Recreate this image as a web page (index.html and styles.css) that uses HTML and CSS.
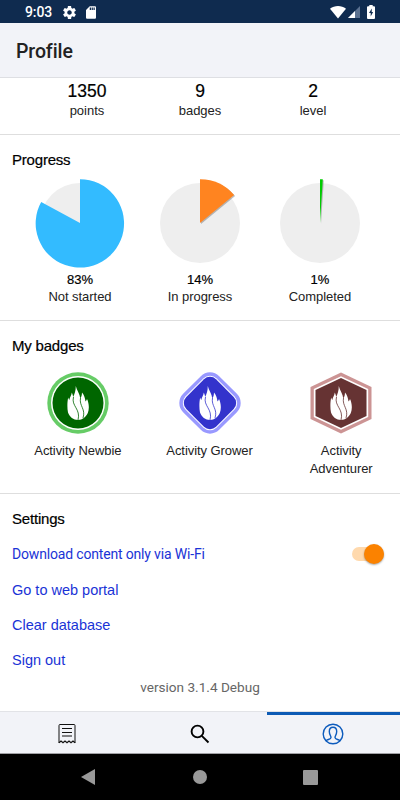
FILE: index.html
```html
<!DOCTYPE html>
<html lang="en">
<head>
    <meta charset="UTF-8">
    <title>Profile</title>
    <link rel="stylesheet" href="styles.css">
</head>
<body>
    <!-- Shared flame shape used by the badges -->
    <svg class="defs" width="0" height="0">
        <symbol id="flame" viewBox="0 0 22 34">
            <path fill="#fff" d="M8.800 0C9.500 4 13 8 13.300 12.500C14.300 11 15 9 15 6.500C17.300 9 18 12 18.500 15.500C19.300 14.800 19.800 14 20 13C22 17 22.500 23 20.800 27C18.800 31 15.500 34 11 34C6.500 34 2.500 31 1 26.500C0 22 .3 15 1.200 11.500C1.500 12.500 1.800 13.500 2.300 14C2.800 11 4.500 9.500 4.800 6.500C5.500 8 6 9.500 6.200 11C7.500 8 8.800 5 8.800 0Z"/>
        </symbol>
    </svg>

    <div class="status-bar">
        <span class="time">9:03</span>
        <svg class="gear" width="13" height="13" viewBox="2 2 20 20"><path fill="#fff" d="M19.430 12.980c.04-.32.07-.64.07-.98s-.03-.66-.07-.98l2.110-1.650c.19-.15.24-.42.12-.64l-2-3.460c-.12-.22-.39-.3-.61-.22l-2.490 1c-.52-.4-1.080-.73-1.690-.98l-.38-2.650C14.460 2.180 14.250 2 14 2h-4c-.25 0-.46.18-.49.42l-.38 2.650c-.61.25-1.170.59-1.690.98l-2.490-1c-.23-.09-.49 0-.61.22l-2 3.460c-.13.22-.07.49.12.64l2.110 1.650c-.04.32-.07.65-.07.98s.03.66.07.98l-2.110 1.650c-.19.15-.24.42-.12.64l2 3.460c.12.22.39.3.61.22l2.490-1c.52.4 1.080.73 1.690.98l.38 2.650c.03.24.24.42.49.42h4c.25 0 .46-.18.49-.42l.38-2.650c.61-.25 1.170-.59 1.690-.98l2.490 1c.23.09.49 0 .61-.22l2-3.460c.12-.22.07-.49-.12-.64l-2.110-1.650zM12 15.500c-1.930 0-3.500-1.570-3.500-3.500s1.570-3.500 3.500-3.500 3.500 1.570 3.500 3.500-1.570 3.500-3.500 3.500z"/></svg>
        <svg class="sd-card" width="10" height="13" viewBox="4 2 16 20"><path fill="#fff" d="M18 2h-8L4 8v12c0 1.100.9 2 2 2h12c1.100 0 2-.9 2-2V4c0-1.100-.9-2-2-2zm-6 6h-2V4h2v4zm3 0h-2V4h2v4zm3 0h-2V4h2v4z"/></svg>
        <svg class="wifi" width="16" height="13" viewBox="0 0 16 13"><path fill="#fff" d="M0 2.800C4.500-.9 11.500-.9 16 2.800L8 12.500Z"/></svg>
        <svg class="signal" width="12" height="12" viewBox="0 0 12 12"><path fill="#5b7190" d="M12 0V12H0Z"/><path fill="#fff" d="M7 5V12H0Z"/></svg>
        <svg class="battery" width="8" height="14" viewBox="0 0 8 14"><path fill="#fff" d="M2.300 0H5.700V1.300H7Q8 1.300 8 2.300V13Q8 14 7 14H1Q0 14 0 13V2.300Q0 1.300 1 1.300H2.300Z"/><path fill="#0f2b4f" d="M4.800 3.500L2 8.100H3.700V11.500L6.100 7H4.700Z"/></svg>
    </div>

    <header class="header">
        <h1>Profile</h1>
    </header>

    <main>
        <section class="stats">
            <div class="stat"><b>1350</b><span>points</span></div>
            <div class="stat"><b>9</b><span>badges</span></div>
            <div class="stat"><b>2</b><span>level</span></div>
        </section>

        <section class="progress">
            <h2>Progress</h2>
            <div class="charts">
                <div class="chart">
                    <svg width="92" height="92" viewBox="-46 -46 92 92">
                        <circle r="40" fill="#eee"/>
                        <path fill="#33bbff" d="M0 0V-43.800A44.200 44.200 0 1 1 -38.820 -21Z"/>
                    </svg>
                    <b>83%</b>
                    <span>Not started</span>
                </div>
                <div class="chart">
                    <svg width="92" height="92" viewBox="-46 -46 92 92">
                        <circle r="40" fill="#eee"/>
                        <path class="slice" fill="#ff8420" d="M0 0V-43.800A44.300 44.300 0 0 1 34.130 -28Z"/>
                    </svg>
                    <b>14%</b>
                    <span>In progress</span>
                </div>
                <div class="chart">
                    <svg width="92" height="92" viewBox="-46 -46 92 92">
                        <circle r="40" fill="#eee"/>
                        <path class="slice" fill="#0c0" d="M0 0V-43.800L2.780 -43.700Z"/>
                    </svg>
                    <b>1%</b>
                    <span>Completed</span>
                </div>
            </div>
        </section>

        <section class="my-badges">
            <h2>My badges</h2>
            <div class="badges">
                <div class="badge">
                    <svg width="62" height="62" viewBox="-31 -31 62 62">
                        <circle r="30.700" fill="#66cc66"/>
                        <circle r="27" fill="#fff"/>
                        <circle r="25.500" fill="#060"/>
                        <use href="#flame" x="-11" y="-17" width="22" height="34"/>
                        <path class="flame-gap" stroke="#060" d="M-4.500-6C-7 3 3 6 0 17M2.500-5C1 3 8 6 5 15"/>
                    </svg>
                    <span>Activity Newbie</span>
                </div>
                <div class="badge">
                    <svg width="62" height="62" viewBox="-31 -31 62 62">
                        <g transform="rotate(45)">
                            <rect x="-25.500" y="-25.500" width="51" height="51" rx="13" fill="#99f"/>
                            <rect x="-22" y="-22" width="44" height="44" rx="9.500" fill="#fff"/>
                            <rect x="-21" y="-21" width="42" height="42" rx="8.500" fill="#33c"/>
                        </g>
                        <use href="#flame" x="-11" y="-17" width="22" height="34"/>
                        <path class="flame-gap" stroke="#33c" d="M-4.500-6C-7 3 3 6 0 17M2.500-5C1 3 8 6 5 15"/>
                    </svg>
                    <span>Activity Grower</span>
                </div>
                <div class="badge">
                    <svg width="62" height="62" viewBox="-31 -31 62 62">
                        <path fill="#cc9494" d="M0-30.500L30.500-16V16L0 30.500L-30.500 16V-16Z"/>
                        <path fill="#fff" d="M0-26.800L27.200-14V14L0 26.800L-27.200 14V-14Z"/>
                        <path fill="#633" d="M0-25L25.500-13V13L0 25L-25.500 13V-13Z"/>
                        <use href="#flame" x="-11" y="-17" width="22" height="34"/>
                        <path class="flame-gap" stroke="#633" d="M-4.500-6C-7 3 3 6 0 17M2.500-5C1 3 8 6 5 15"/>
                    </svg>
                    <span>Activity<br>Adventurer</span>
                </div>
            </div>
        </section>

        <section class="settings">
            <h2>Settings</h2>
            <div class="setting wifi-only">
                <span>Download content only via Wi-Fi</span>
                <div class="toggle"><div class="knob"></div></div>
            </div>
            <a class="setting">Go to web portal</a>
            <a class="setting">Clear database</a>
            <a class="setting">Sign out</a>
            <p class="version">version 3.1.4 Debug</p>
        </section>
    </main>

    <nav class="tabs">
        <div class="tab">
            <svg width="18" height="20" viewBox="0 0 18 20" fill="none" stroke="#111">
                <path d="M1 19V1.500Q1 .5 2 .5H16Q17 .5 17 1.500V19" stroke-width="1"/>
                <path d="M1 18.700L3 17L5 18.700L7 17L9 18.700L11 17L13 18.700L15 17L17 18.700" stroke-width="1.300"/>
                <path d="M4 4.500H14M4 8.500H14M4 12H14" stroke-width="1.200"/>
            </svg>
        </div>
        <div class="tab">
            <svg width="20" height="20" viewBox="0 0 20 20" fill="none" stroke="#000" stroke-width="1.900">
                <circle cx="7.500" cy="7.500" r="5.900"/>
                <path d="M11.800 11.800L18.500 18.500"/>
            </svg>
        </div>
        <div class="tab active">
            <svg width="22" height="22" viewBox="0 0 22 22" fill="none" stroke="#0d5bbd" stroke-width="1.400">
                <circle cx="11" cy="11" r="9.800"/>
                <path d="M4 17.800C5 16.300 9 16.500 9 14.500C9 13 7.300 11.500 7.300 8.500C7.300 5.500 8.500 4.200 11 4.200S14.700 5.500 14.700 8.500C14.700 11.500 13 13 13 14.500C13 16.500 17 16.300 18 17.800"/>
            </svg>
        </div>
    </nav>

    <div class="nav-bar">
        <svg width="14" height="16" viewBox="0 0 14 16"><path fill="#999" d="M14 0V16L0 8Z"/></svg>
        <svg width="15" height="14" viewBox="0 0 15 14"><circle cx="8" cy="7" r="7" fill="#999"/></svg>
        <svg width="15" height="15" viewBox="0 0 15 15"><rect width="15" height="15" rx="1" fill="#999"/></svg>
    </div>
</body>
</html>
```

FILE: styles.css
```css
* {
    box-sizing: border-box;
}
body {
    margin: 0;
    width: 400px;
    height: 800px;
    display: flex;
    flex-direction: column;
    overflow: hidden;
    background-color: #fff;
    color: #222;
    font-family: "Liberation Sans", Arial, sans-serif;
    font-size: 13px;
}
svg {
    display: block;
    flex-shrink: 0;
}
.defs {
    position: absolute;
}
.status-bar {
    height: 23px;
    flex-shrink: 0;
    display: flex;
    align-items: center;
    padding: 1px 25px 0 25px;
    background-color: #0f2b4f;
    color: #fff;
}
.time {
    width: 38px;
    font-family: Roboto, sans-serif;
    font-size: 14px;
    font-weight: 500;
    letter-spacing: -0.1px;
}
.sd-card {
    margin-left: 10px;
}
.wifi {
    margin-left: auto;
}
.signal {
    margin-left: 2px;
}
.battery {
    margin-left: 7px;
}
.header {
    height: 55px;
    flex-shrink: 0;
    padding: 17px 16px 0 16px;
    background-color: #f2f3f8;
    border-bottom: 1px solid #dedfe3;
}
h1 {
    margin: 0;
    font-family: Roboto, sans-serif;
    font-size: 19.5px;
    font-weight: 500;
    line-height: 24px;
    letter-spacing: -0.1px;
}
main {
    height: 633px;
    flex-shrink: 0;
}
section {
    border-bottom: 1px solid #dedede;
}
h2 {
    margin: 0;
    padding-left: 12px;
    color: #000;
    font-size: 15px;
    font-weight: normal;
    line-height: 18px;
    letter-spacing: -0.2px;
    -webkit-text-stroke: 0.2px #000;
}
b {
    color: #000;
    font-weight: normal;
    -webkit-text-stroke: 0.2px #000;
}
.stats {
    height: 57px;
    display: flex;
    padding: 2px 30.5px 0 30.5px;
}
.stat {
    flex: 1;
    display: flex;
    flex-direction: column;
    align-items: center;
}
.stat b {
    font-size: 17.5px;
    line-height: 22px;
}
.stat span {
    line-height: 17px;
}
.progress {
    height: 186px;
    padding-top: 16px;
}
.charts {
    display: flex;
    padding: 8px 20px 0 20px;
}
.chart {
    flex: 1;
    display: flex;
    flex-direction: column;
    align-items: center;
}
.chart b {
    margin-top: 2px;
    line-height: 17px;
}
.chart span {
    line-height: 17px;
    letter-spacing: -0.05px;
}
.slice {
    filter: drop-shadow(1px 1px 0.5px rgba(0, 0, 0, 0.25));
}
.my-badges {
    height: 173px;
    padding-top: 16px;
    overflow: hidden;
}
.badges {
    width: 395px;
    display: flex;
    margin: 17px 0 0 12px;
}
.badge {
    flex: 1;
    display: flex;
    flex-direction: column;
    align-items: center;
    text-align: center;
}
.badge span {
    margin-top: 8px;
    line-height: 18px;
    letter-spacing: -0.07px;
}
.flame-gap {
    fill: none;
    stroke-width: 0.8;
}
.settings {
    height: 217px;
    padding-top: 16px;
    border-bottom: none;
}
.setting {
    height: 35px;
    display: flex;
    align-items: center;
    padding: 0 15px 0 12px;
    color: #1a33d6;
    font-size: 14.5px;
}
.wifi-only {
    height: 36px;
    margin-top: 8px;
    justify-content: space-between;
    font-family: Roboto, sans-serif;
    font-size: 14px;
    letter-spacing: -0.17px;
}
.toggle {
    width: 32px;
    height: 14px;
    display: flex;
    align-items: center;
    justify-content: flex-end;
    margin-right: 1px;
    border-radius: 7px;
    background-color: #ffd9ad;
}
.knob {
    width: 20px;
    height: 20px;
    flex-shrink: 0;
    border-radius: 50%;
    background-color: #fb8200;
    box-shadow: 0 1px 2px rgba(0, 0, 0, 0.35);
}
.version {
    margin: 0;
    color: #666;
    font-family: Roboto, sans-serif;
    font-size: 13.6px;
    line-height: 20px;
    text-align: center;
}
.tabs {
    height: 43px;
    flex-shrink: 0;
    display: flex;
    background-color: #f2f3f8;
    border-top: 1px solid #e2e3e7;
    border-bottom: 1px solid #a0a0a4;
}
.tab {
    flex: 1;
    display: flex;
    align-items: center;
    justify-content: center;
    padding-top: 3px;
}
.active {
    padding-top: 0;
    border-top: 3px solid #0d5bb5;
}
.nav-bar {
    height: 46px;
    flex-shrink: 0;
    display: flex;
    align-items: center;
    justify-content: space-between;
    padding: 0 82px 0 81px;
    background-color: #000;
}
```
